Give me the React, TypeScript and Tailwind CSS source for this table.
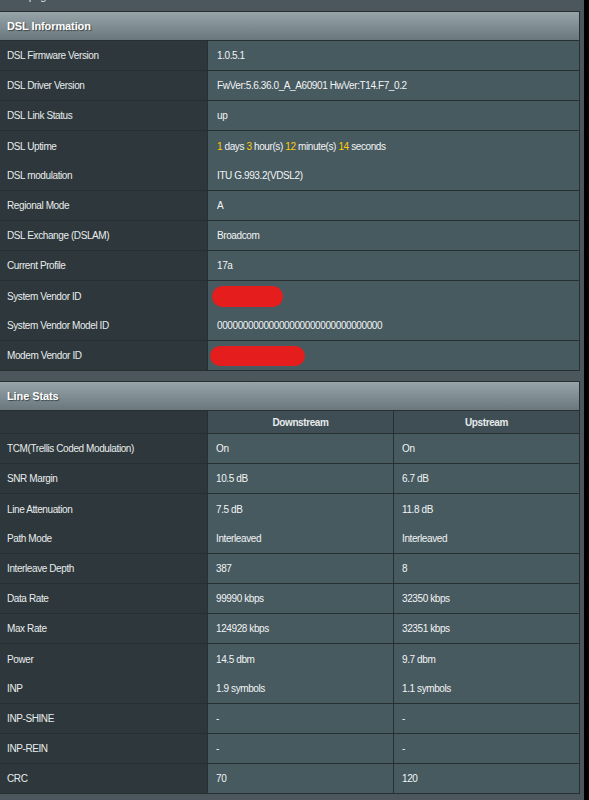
import React from 'react';

type Row = {
  label: string;
  value?: React.ReactNode;
  down?: string;
  up?: string;
  joined?: boolean; // no separator under this row
};

const Y = ({ children }: { children: React.ReactNode }) => (
  <span className="text-[#ffcc00]">{children}</span>
);

const dslRows: Row[] = [
  { label: 'DSL Firmware Version', value: '1.0.5.1' },
  { label: 'DSL Driver Version', value: 'FwVer:5.6.36.0_A_A60901 HwVer:T14.F7_0.2' },
  { label: 'DSL Link Status', value: 'up' },
  {
    label: 'DSL Uptime',
    joined: true,
    value: (
      <span>
        <Y>1</Y> days <Y>3</Y> hour(s) <Y>12</Y> minute(s) <Y>14</Y> seconds
      </span>
    ),
  },
  { label: 'DSL modulation', value: 'ITU G.993.2(VDSL2)' },
  { label: 'Regional Mode', value: 'A' },
  { label: 'DSL Exchange (DSLAM)', value: 'Broadcom' },
  { label: 'Current Profile', value: '17a' },
  {
    label: 'System Vendor ID',
    joined: true,
    value: <span className="block h-[21px] w-[71px] rounded-full bg-[#e51d1d] -ml-[5px]" />,
  },
  { label: 'System Vendor Model ID', value: '00000000000000000000000000000000' },
  {
    label: 'Modem Vendor ID',
    value: <span className="block h-[20px] w-[95px] rounded-full bg-[#e51d1d] -ml-[7px]" />,
  },
];

const statRows: Row[] = [
  { label: 'TCM(Trellis Coded Modulation)', down: 'On', up: 'On' },
  { label: 'SNR Margin', down: '10.5 dB', up: '6.7 dB' },
  { label: 'Line Attenuation', down: '7.5 dB', up: '11.8 dB', joined: true },
  { label: 'Path Mode', down: 'Interleaved', up: 'Interleaved' },
  { label: 'Interleave Depth', down: '387', up: '8' },
  { label: 'Data Rate', down: '99990 kbps', up: '32350 kbps' },
  { label: 'Max Rate', down: '124928 kbps', up: '32351 kbps' },
  { label: 'Power', down: '14.5 dbm', up: '9.7 dbm', joined: true },
  { label: 'INP', down: '1.9 symbols', up: '1.1 symbols' },
  { label: 'INP-SHINE', down: '-', up: '-' },
  { label: 'INP-REIN', down: '-', up: '-' },
  { label: 'CRC', down: '70', up: '120' },
];

function SectionHeader({ title }: { title: string }) {
  return (
    <div className="h-[30px] border-y border-[#263033] bg-gradient-to-b from-[#97a5aa] to-[#6a787d] flex items-center pl-[7px]">
      <span className="text-[11px] font-bold text-white tracking-[-0.1px] [text-shadow:1px_1px_1px_#3a4448]">
        {title}
      </span>
    </div>
  );
}

function App() {
  return (
    <div
      className="min-h-screen bg-[#4b575d] flex text-[10px] tracking-[-0.4px] text-[#e8ecec]"
      style={{ fontFamily: '"Liberation Sans", Arial, sans-serif' }}
    >
      <div className="w-[584px]">
        {/* page note, scrolled mostly out of view */}
        <div className="h-[11px] overflow-hidden">
          <p className="pl-[7px] -mt-[12px] text-[11px] leading-[16px] text-[#dfe5e6]">
            This page shows the DSL line status
          </p>
        </div>

        {/* DSL Information */}
        <div className="w-[580px] border-r border-[#263033]">
          <SectionHeader title="DSL Information" />
          {dslRows.map((r) => (
            <div
              key={r.label}
              className={`flex h-[30px] ${r.joined ? '' : 'border-b border-[#263033]'}`}
            >
              <div className="w-[208px] bg-[#2e383c] border-r border-[#263033] flex items-center pl-[7px]">
                {r.label}
              </div>
              <div className="flex-1 bg-[#475a60] flex items-center pl-[9px] text-[#f2f4f4]">
                {r.value}
              </div>
            </div>
          ))}
        </div>

        <div className="h-[10px]" />

        {/* Line Stats */}
        <div className="w-[580px] border-r border-[#263033]">
          <SectionHeader title="Line Stats" />
          <div className="flex h-[23px] border-b border-[#263033] font-bold text-[#e6eaeb]">
            <div className="w-[208px] bg-[#2e383c] border-r border-[#263033]" />
            <div className="w-[186px] bg-[#3e4e54] border-r border-[#263033] flex items-center justify-center">
              Downstream
            </div>
            <div className="flex-1 bg-[#3e4e54] flex items-center justify-center">Upstream</div>
          </div>
          {statRows.map((r) => (
            <div
              key={r.label}
              className={`flex h-[30px] ${r.joined ? '' : 'border-b border-[#263033]'}`}
            >
              <div className="w-[208px] bg-[#2e383c] border-r border-[#263033] flex items-center pl-[7px]">
                {r.label}
              </div>
              <div className="w-[186px] bg-[#475a60] border-r border-[#263033] flex items-center pl-[8px] text-[#f2f4f4]">
                {r.down}
              </div>
              <div className="flex-1 bg-[#475a60] flex items-center pl-[8px] text-[#f2f4f4]">
                {r.up}
              </div>
            </div>
          ))}
        </div>
      </div>
      <div className="flex-1 bg-black" />
    </div>
  );
}

export default App;
